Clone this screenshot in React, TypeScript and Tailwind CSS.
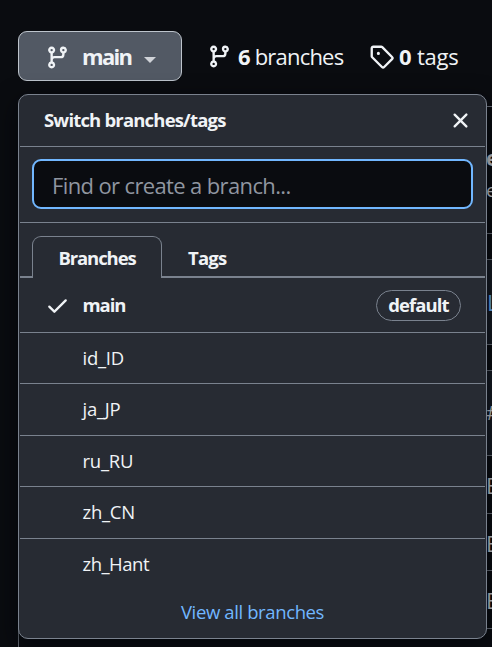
import React from "react";

const BRANCH =
  "M11.75 2.5a.75.75 0 100 1.5.75.75 0 000-1.5zm-2.25.75a2.25 2.25 0 113 2.122V6A2.5 2.5 0 0110 8.5H6a1 1 0 00-1 1v1.128a2.251 2.251 0 11-1.5 0V5.372a2.25 2.25 0 111.5 0v1.836A2.492 2.492 0 016 7h4a1 1 0 001-1v-.628A2.25 2.25 0 019.5 3.25zM4.25 12a.75.75 0 100 1.5.75.75 0 000-1.5zM3.5 3.25a.75.75 0 111.5 0 .75.75 0 01-1.5 0z";
const TAG =
  "M2.5 7.775V2.75a.25.25 0 01.25-.25h5.025a.25.25 0 01.177.073l6.25 6.25a.25.25 0 010 .354l-5.025 5.025a.25.25 0 01-.354 0l-6.25-6.25a.25.25 0 01-.073-.177zm-1.5 0V2.75C1 1.784 1.784 1 2.75 1h5.025c.464 0 .91.184 1.238.513l6.25 6.25a1.75 1.75 0 010 2.474l-5.026 5.026a1.75 1.75 0 01-2.474 0l-6.25-6.25A1.75 1.75 0 011 7.775zM6 5a1 1 0 100 2 1 1 0 000-2z";
const CLOSE =
  "M3.72 3.72a.75.75 0 011.06 0L8 6.94l3.22-3.22a.75.75 0 111.06 1.06L9.06 8l3.22 3.22a.75.75 0 11-1.06 1.06L8 9.06l-3.22 3.22a.75.75 0 01-1.06-1.06L6.94 8 3.72 4.78a.75.75 0 010-1.06z";
const CHECK =
  "M13.78 4.22a.75.75 0 010 1.06l-7.25 7.25a.75.75 0 01-1.06 0L2.22 9.28a.75.75 0 011.06-1.06L6 10.94l6.72-6.72a.75.75 0 011.06 0z";

function Octicon({ d, className = "" }: { d: string; className?: string }) {
  return (
    <svg viewBox="0 0 16 16" fill="currentColor" className={`size-[25px] shrink-0 ${className}`}>
      <path fillRule="evenodd" clipRule="evenodd" d={d} />
    </svg>
  );
}

const rows = [
  { name: "id_ID", height: "h-[51px]" },
  { name: "ja_JP", height: "h-[52px]" },
  { name: "ru_RU", height: "h-[51px]" },
  { name: "zh_CN", height: "h-[52px]" },
];

/* Repository file table that shows past the right edge of the menu. */
function FileTable() {
  return (
    <div className="absolute top-[106px] left-[18px] h-[560px] w-[500px] border-t border-l border-[#6c727c] text-[#d0d4da]">
      <div className="flex flex-col pl-[467px]">
        <div className="flex h-[126px] flex-col pt-[34px]">
          <span className="text-[21px] leading-[34px] font-bold">e</span>
          <span className="text-[19px] leading-[30px]">e</span>
        </div>
        <div className="h-[27px] border-y border-[#6c727c]" />
        <div className="flex h-[85px] items-center border-b border-[#6c727c] bg-[#161b23] pl-px text-[22px] text-[#71b7ff]">
          L
        </div>
        <div className="h-[26px] border-b border-[#6c727c]" />
        <div className="flex h-[85px] items-center border-b border-[#6c727c] bg-[#161b23] text-[20px]">#</div>
        <div className="flex h-[58px] items-center border-b border-[#6c727c] pt-0.5 text-[22px]">E</div>
        <div className="flex h-[57px] items-center border-b border-[#6c727c] pt-0.5 text-[22px]">E</div>
        <div className="flex h-[58px] items-center border-b border-[#6c727c] pt-0.5 text-[22px]">E</div>
      </div>
    </div>
  );
}

function BranchMenu() {
  return (
    <div className="absolute top-[94px] left-[18px] flex h-[545px] w-[469px] flex-col rounded-[10px] border border-[#7a828e] bg-[#272b33] px-px text-[18.5px] text-[#f0f3f6] shadow-[0_8px_24px_rgba(1,4,9,0.75)]">
      <div className="flex h-[52px] shrink-0 items-center justify-between border-b border-[#7a828e] pr-3 pl-[24px]">
        <span className="pb-0.5 font-bold tracking-[-0.82px]">Switch branches/tags</span>
        <Octicon d={CLOSE} />
      </div>
      <div className="flex h-[76px] shrink-0 border-b border-[#7a828e] px-3 pt-3">
        <div className="flex h-[50px] w-[441px] items-center rounded-[9px] border-[2.5px] border-[#71b7ff] bg-[#0a0c10] pt-[3px] pl-[18px] text-[22px] tracking-[-0.63px] text-[#9096a0]">
          Find or create a branch...
        </div>
      </div>
      <div className="flex h-[55px] shrink-0 items-end">
        <div className="h-[42px] w-3 border-b-2 border-[#7a828e]" />
        <div className="flex h-[42px] w-[130px] items-center justify-center rounded-t-[9px] border-x border-t border-[#7a828e] pt-px font-bold tracking-[-1.1px]">
          Branches
        </div>
        <div className="flex h-[42px] flex-1 items-center border-b-2 border-[#7a828e] pt-[3px] pl-[26px] font-bold tracking-[-0.8px]">
          Tags
        </div>
      </div>
      <div className="flex h-[55px] shrink-0 items-center border-b border-[#7a828e] pr-6 pl-[25px]">
        <Octicon d={CHECK} />
        <span className="ml-[12.5px] flex-1 font-bold tracking-[-1.1px]">main</span>
        <span className="flex h-[31px] w-[85px] items-center justify-center rounded-full border border-[#7a828e] font-bold tracking-[-0.9px]">
          default
        </span>
      </div>
      {rows.map((r) => (
        <div
          key={r.name}
          className={`flex shrink-0 items-center border-b border-[#7a828e] pb-px pl-[62.5px] tracking-[-0.25px] ${r.height}`}
        >
          {r.name}
        </div>
      ))}
      <div className="flex h-[51px] shrink-0 items-center pb-px pl-[62.5px] tracking-[-0.5px]">zh_Hant</div>
      <div className="flex h-[46px] shrink-0 items-center justify-center pb-0.5 tracking-[-0.38px] text-[#71b7ff]">
        View all branches
      </div>
    </div>
  );
}

export default function App() {
  return (
    <div className="relative h-[647px] w-[492px] overflow-hidden bg-[#0a0c10] font-['Open_Sans','Noto_Sans',sans-serif] text-[#f0f3f6]">
      <FileTable />
      <div className="relative flex items-center pt-[31px] pl-[18px] text-[22px]">
        <button className="flex h-[50px] w-[164px] items-center rounded-[9px] border border-[#bdc4cc] bg-[#525964] pl-[26px]">
          <Octicon d={BRANCH} className="mt-0.5" />
          <span className="ml-[12px] w-[50px] text-left font-bold tracking-[-1.7px]">main</span>
          <span className="mt-[7px] ml-3 border-x-[6px] border-t-[6px] border-x-transparent border-t-[#d0d3d8]" />
        </button>
        <div className="ml-[25px] flex items-center">
          <Octicon d={BRANCH} />
          <span className="ml-[6px] w-[105px] tracking-[-0.8px] whitespace-nowrap">
            <b className="font-bold">6</b> branches
          </span>
        </div>
        <div className="ml-[26px] flex items-center">
          <Octicon d={TAG} />
          <span className="ml-[5px] tracking-[-0.2px]">
            <b className="font-bold">0</b> tags
          </span>
        </div>
      </div>
      <BranchMenu />
    </div>
  );
}
